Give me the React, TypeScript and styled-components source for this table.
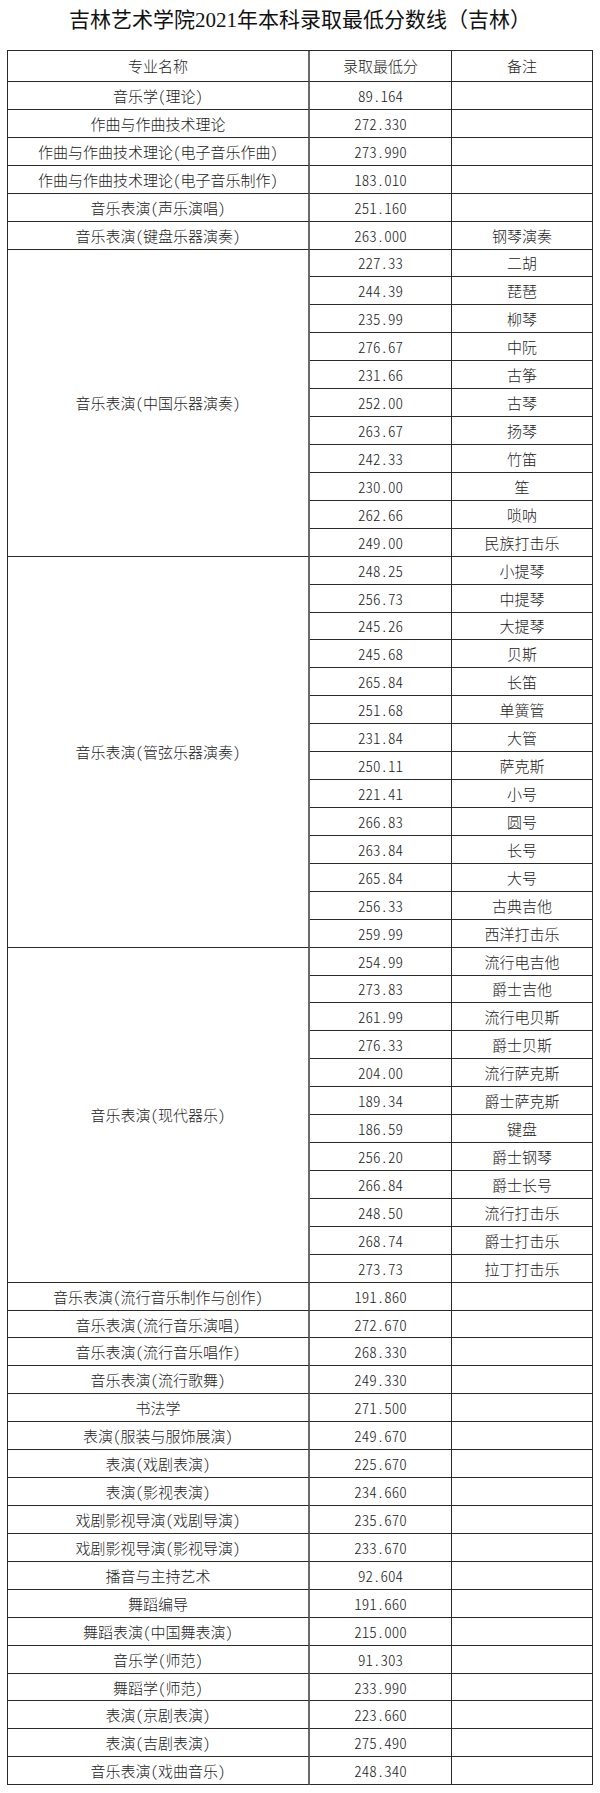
import React from "react";
import styled, { createGlobalStyle } from "styled-components";

type Single = { name: string; score: string; note?: string };
type Group = { name: string; items: [string, string][] };
type Row = Single | Group;

const ROW_H = 27.93;

const rows: Row[] = [
  { name: "音乐学(理论)", score: "89.164" },
  { name: "作曲与作曲技术理论", score: "272.330" },
  { name: "作曲与作曲技术理论(电子音乐作曲)", score: "273.990" },
  { name: "作曲与作曲技术理论(电子音乐制作)", score: "183.010" },
  { name: "音乐表演(声乐演唱)", score: "251.160" },
  { name: "音乐表演(键盘乐器演奏)", score: "263.000", note: "钢琴演奏" },
  {
    name: "音乐表演(中国乐器演奏)",
    items: [
      ["227.33", "二胡"],
      ["244.39", "琵琶"],
      ["235.99", "柳琴"],
      ["276.67", "中阮"],
      ["231.66", "古筝"],
      ["252.00", "古琴"],
      ["263.67", "扬琴"],
      ["242.33", "竹笛"],
      ["230.00", "笙"],
      ["262.66", "唢呐"],
      ["249.00", "民族打击乐"],
    ],
  },
  {
    name: "音乐表演(管弦乐器演奏)",
    items: [
      ["248.25", "小提琴"],
      ["256.73", "中提琴"],
      ["245.26", "大提琴"],
      ["245.68", "贝斯"],
      ["265.84", "长笛"],
      ["251.68", "单簧管"],
      ["231.84", "大管"],
      ["250.11", "萨克斯"],
      ["221.41", "小号"],
      ["266.83", "圆号"],
      ["263.84", "长号"],
      ["265.84", "大号"],
      ["256.33", "古典吉他"],
      ["259.99", "西洋打击乐"],
    ],
  },
  {
    name: "音乐表演(现代器乐)",
    items: [
      ["254.99", "流行电吉他"],
      ["273.83", "爵士吉他"],
      ["261.99", "流行电贝斯"],
      ["276.33", "爵士贝斯"],
      ["204.00", "流行萨克斯"],
      ["189.34", "爵士萨克斯"],
      ["186.59", "键盘"],
      ["256.20", "爵士钢琴"],
      ["266.84", "爵士长号"],
      ["248.50", "流行打击乐"],
      ["268.74", "爵士打击乐"],
      ["273.73", "拉丁打击乐"],
    ],
  },
  { name: "音乐表演(流行音乐制作与创作)", score: "191.860" },
  { name: "音乐表演(流行音乐演唱)", score: "272.670" },
  { name: "音乐表演(流行音乐唱作)", score: "268.330" },
  { name: "音乐表演(流行歌舞)", score: "249.330" },
  { name: "书法学", score: "271.500" },
  { name: "表演(服装与服饰展演)", score: "249.670" },
  { name: "表演(戏剧表演)", score: "225.670" },
  { name: "表演(影视表演)", score: "234.660" },
  { name: "戏剧影视导演(戏剧导演)", score: "235.670" },
  { name: "戏剧影视导演(影视导演)", score: "233.670" },
  { name: "播音与主持艺术", score: "92.604" },
  { name: "舞蹈编导", score: "191.660" },
  { name: "舞蹈表演(中国舞表演)", score: "215.000" },
  { name: "音乐学(师范)", score: "91.303" },
  { name: "舞蹈学(师范)", score: "233.990" },
  { name: "表演(京剧表演)", score: "223.660" },
  { name: "表演(吉剧表演)", score: "275.490" },
  { name: "音乐表演(戏曲音乐)", score: "248.340" },
];

const rowCount = rows.reduce(
  (n, r) => n + ("items" in r ? r.items.length : 1),
  0
);

const App = () => {
  return (
    <>
      <GlobalStyle />
      <Page>
        <Title>吉林艺术学院2021年本科录取最低分数线（吉林）</Title>
        <Sheet $rows={rowCount}>
          <Cell $head $first>专业名称</Cell>
          <Cell $head>录取最低分</Cell>
          <Cell $head>备注</Cell>
          {rows.map((r, idx) =>
            "items" in r ? (
              <React.Fragment key={idx}>
                <Cell $first $span={r.items.length}>
                  {r.name}
                </Cell>
                {r.items.map(([score, note], i) => (
                  <React.Fragment key={i}>
                    <Cell>{score}</Cell>
                    <Cell>{note}</Cell>
                  </React.Fragment>
                ))}
              </React.Fragment>
            ) : (
              <React.Fragment key={idx}>
                <Cell $first>{r.name}</Cell>
                <Cell>{r.score}</Cell>
                <Cell>{r.note}</Cell>
              </React.Fragment>
            )
          )}
        </Sheet>
      </Page>
    </>
  );
};

const GlobalStyle = createGlobalStyle`
  html, body {
    margin: 0;
    padding: 0;
    background: #fff;
  }
`;

const Page = styled.div`
  width: 600px;
  padding: 0 7px;
  box-sizing: border-box;
  color: #1c1c1c;
`;

const Title = styled.h1`
  margin: 0;
  height: 50px;
  line-height: 40px;
  text-align: center;
  font-family: "Liberation Serif", "Noto Sans CJK SC", serif;
  font-size: 21px;
  font-weight: 400;
  color: #111;
`;

const Sheet = styled.div<{ $rows: number }>`
  display: grid;
  grid-template-columns: 302px 142px 141px;
  grid-template-rows: 31px repeat(${(p) => p.$rows}, ${ROW_H}px);
  border-top: 1px solid #2a2a2a;
  border-left: 1px solid #2a2a2a;
  font-family: "Noto Sans CJK SC", sans-serif;
  font-feature-settings: "hwid";
  font-size: 15px;
  font-weight: 300;
`;

const Cell = styled.div<{ $span?: number; $head?: boolean; $first?: boolean }>`
  grid-row: span ${(p) => p.$span || 1};
  display: flex;
  align-items: center;
  justify-content: center;
  box-sizing: border-box;
  border-bottom: 1px solid #2a2a2a;
  border-right: ${(p) => (p.$first ? "2px solid #6a6a6a" : "1px solid #2a2a2a")};
  padding-bottom: ${(p) => (p.$head ? "2px" : "0")};
  white-space: nowrap;
`;

export default App;
